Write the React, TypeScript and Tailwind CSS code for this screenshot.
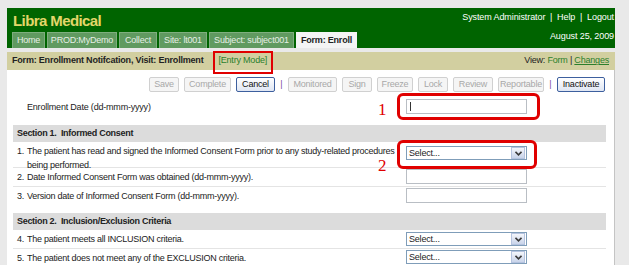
import React from 'react';

const actions = [
  { label: 'Save', w: 'w-[30px]', on: false },
  { label: 'Complete', w: 'w-[47px]', on: false },
  { label: 'Cancel', w: 'w-[39px]', on: true },
  { label: '|', sep: true },
  { label: 'Monitored', w: 'w-[49px]', on: false },
  { label: 'Sign', w: 'w-[30px]', on: false },
  { label: 'Freeze', w: 'w-[36px]', on: false },
  { label: 'Lock', w: 'w-[30px]', on: false },
  { label: 'Review', w: 'w-[40px]', on: false },
  { label: 'Reportable', w: 'w-[46px]', on: false },
  { label: '|', sep: true },
  { label: 'Inactivate', w: 'w-[48px]', on: true },
];

const tabs = [
  { label: 'Home', w: 'w-[33px]' },
  { label: 'PROD:MyDemo', w: 'w-[70px]' },
  { label: 'Collect', w: 'w-[38px]' },
  { label: 'Site: lt001', w: 'w-[48px]' },
  { label: 'Subject: subject001', w: 'w-[85px]' },
];

const Select: React.FC = () => (
  <div className="w-[121px] h-[14px] border border-[#7f9db9] bg-white flex items-center justify-between">
    <span className="pl-[2px] text-[9px] tracking-[-0.2px] leading-none text-[#222]">Select...</span>
    <span className="w-[14px] h-[12px] mr-[1px] bg-gradient-to-b from-[#f4f6fb] to-[#c9d4ea] border border-[#b5c3df] flex items-center justify-center">
      <svg width="7" height="5" viewBox="0 0 7 5">
        <path d="M0.5 0.8 L3.5 3.8 L6.5 0.8" stroke="#3a3a3a" strokeWidth="1.6" fill="none" />
      </svg>
    </span>
  </div>
);

const TextBox: React.FC<{ caret?: boolean }> = ({ caret }) => (
  <div className="w-[121px] h-[15px] border border-[#b9bec4] bg-white flex items-center">
    {caret && <span className="ml-[3px] w-[1px] h-[9px] bg-[#333]" />}
  </div>
);

const Row: React.FC<{ n: number; text: React.ReactNode; field: React.ReactNode; tall?: boolean; last?: boolean }> = ({ n, text, field, tall, last }) => (
  <div className={`flex ${last ? '' : 'border-b border-[#e4e4e4]'} ${tall ? 'h-[26px]' : 'h-[19px]'} pt-[1px]`}>
    <div className="w-[393px] flex pl-[4px] pt-[1px] text-[9px] tracking-[-0.25px] leading-[14px] text-[#222] whitespace-nowrap">
      <span className="w-[10px] shrink-0">{n}.</span>
      <span>{text}</span>
    </div>
    <div>{field}</div>
  </div>
);

export default function App() {
  return (
    <div className="w-[629px] h-[265px] bg-[#e9e9e9] overflow-hidden pt-[8px] pl-[7px] font-['Liberation_Sans',Arial,sans-serif]">
      {/* top header */}
      <div className="w-[608px] h-[40px] bg-[#006400] flex justify-between">
        <div className="flex flex-col pl-[5px]">
          <div className="text-[15px] font-bold tracking-[-0.6px] leading-none text-[#e3d66a] pt-[5px] h-[24px] pl-[1px]">Libra Medical</div>
          <div className="flex gap-[2px] items-end">
            {tabs.map((t) => (
              <div key={t.label} className={`${t.w} h-[16px] text-center bg-[#609a60] border border-[#7fae7f] border-b-0 text-[9px] tracking-[-0.2px] leading-[15px] text-[#e6efe6] whitespace-nowrap`}>
                {t.label}
              </div>
            ))}
            <div className="w-[61px] h-[16px] text-center bg-[#f4f4f4] text-[9px] tracking-[-0.2px] leading-[16px] font-bold text-[#222] whitespace-nowrap">Form: Enroll</div>
          </div>
        </div>
        <div className="flex flex-col items-end pr-[1px] text-[9px] tracking-[-0.1px] text-white leading-none whitespace-nowrap">
          <div className="pt-[5px] h-[24px]">System Administrator&nbsp; |&nbsp; Help&nbsp; |&nbsp; Logout</div>
          <div>August 25, 2009</div>
        </div>
      </div>

      {/* form bar */}
      <div className="mt-[4px] w-[608px] h-[18px] bg-[#d2cfa0] flex items-center justify-between pl-[5px] pr-[6px] text-[9px] whitespace-nowrap">
        <div className="flex items-center">
          <span className="font-bold tracking-[-0.2px] text-[#222]">Form: Enrollment Notifcation, Visit: Enrollment</span>
          <span className="relative ml-[15px] tracking-[-0.2px] text-[#2c7f2c]">
            [Entry Mode]
            <span className="absolute left-[-5px] right-[-6px] top-[-3px] bottom-[-6px] border-2 border-[#e00000]" />
          </span>
        </div>
        <div className="text-[#222] tracking-[-0.2px]">
          View: <span className="text-[#2c7f2c]">Form</span> | <span className="text-[#2c7f2c] underline">Changes</span>
        </div>
      </div>

      {/* content */}
      <div className="w-[608px] h-[200px] bg-white border-r border-[#c4c4c4] pl-[6px] pr-[8px]">
        <div className="flex justify-end items-center gap-[5px] pt-[7px] pr-[1px]">
          {actions.map((a, i) =>
            a.sep ? (
              <span key={i} className="w-[3px] text-center text-[9px] text-[#7a4a9a]">|</span>
            ) : (
              <div
                key={i}
                className={`${a.w} h-[15px] text-center rounded-[2px] text-[9px] tracking-[-0.2px] leading-[13px] border ${
                  a.on
                    ? 'border-[#3d5f9e] bg-gradient-to-b from-white to-[#dfe6f3] text-[#111]'
                    : 'border-[#d0d0d0] bg-[#f5f5f5] text-[#a8a8a8]'
                }`}
              >
                {a.label}
              </div>
            )
          )}
        </div>

        {/* enrollment date */}
        <div className="flex h-[17px] mt-[7px] relative">
          <div className="w-[393px] pl-[14px] text-[9px] tracking-[-0.2px] leading-[14px] pt-[1px] text-[#222]">Enrollment Date (dd-mmm-yyyy)</div>
          <TextBox caret />
          <div className="absolute left-[384px] top-[-6px] w-[143px] h-[27px] border-[3px] border-[#e00000] rounded-[6px]" />
          <div className="absolute left-[365px] top-[2px] text-[17px] leading-none text-[#e00000] font-['Liberation_Serif',serif]">1</div>
        </div>

        {/* section 1 */}
        <div className="mt-[9px] h-[17px] bg-[#dcdcdc] pl-[4px] text-[9px] tracking-[-0.3px] leading-[17px] font-bold text-[#222]">Section 1.&nbsp; Informed Consent</div>
        <div className="relative">
          <Row
            n={1}
            tall
            text={<>The patient has read and signed the Informed Consent Form prior to any study-related procedures<br />being performed.</>}
            field={<div className="pt-[3px]"><Select /></div>}
          />
          <div className="absolute left-[384px] top-[-2px] w-[140px] h-[29px] border-[3px] border-[#e00000] rounded-[6px]" />
          <div className="absolute left-[365px] top-[15px] text-[17px] leading-none text-[#e00000] font-['Liberation_Serif',serif]">2</div>
        </div>
        <Row n={2} text="Date Informed Consent Form was obtained (dd-mmm-yyyy)." field={<TextBox />} />
        <Row n={3} last text="Version date of Informed Consent Form (dd-mmm-yyyy)." field={<TextBox />} />

        {/* section 2 */}
        <div className="mt-[7px] h-[17px] bg-[#dcdcdc] pl-[4px] text-[9px] tracking-[-0.3px] leading-[17px] font-bold text-[#222]">Section 2.&nbsp; Inclusion/Exclusion Criteria</div>
        <Row n={4} text="The patient meets all INCLUSION criteria." field={<div className="pt-[1px]"><Select /></div>} />
        <Row n={5} text="The patient does not meet any of the EXCLUSION criteria." field={<Select />} />
      </div>
    </div>
  );
}
